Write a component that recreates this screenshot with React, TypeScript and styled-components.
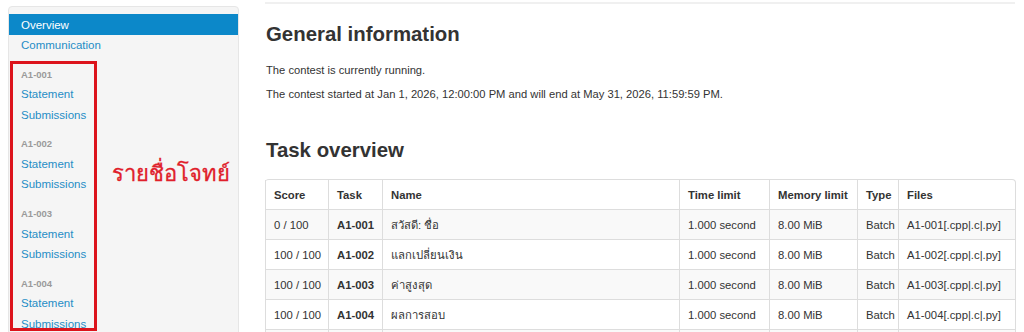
import React from "react";
import styled, { createGlobalStyle } from "styled-components";

const Global = createGlobalStyle`
  html, body { margin: 0; padding: 0; background: #fff; }
  body { font-family: "Liberation Sans", Arial, sans-serif; color: #333; overflow: hidden; }
`;

const Page = styled.div`
  display: flex;
  align-items: flex-start;
  width: 1024px;
  height: 332px;
  overflow: hidden;
`;

const SideWrap = styled.div`
  position: relative;
  margin: 6px 0 0 8px;
  width: 231px;
`;

const Well = styled.nav`
  background: #f5f5f5;
  border: 1px solid #e6e6e6;
  border-radius: 4px;
  padding: 7px 0 20px;
  height: 340px;
  box-sizing: border-box;
`;

const NavList = styled.ul`
  list-style: none;
  margin: 0;
  padding: 0;
`;

const NavItem = styled.li<{ $active?: boolean }>`
  height: 20.3px;
  display: flex;
  align-items: center;
  padding-left: 12px;
  font-size: 11.5px;
  color: ${(p) => (p.$active ? "#fff" : "#1f8dc6")};
  background: ${(p) => (p.$active ? "#0c88c9" : "transparent")};
  ${(p) => (p.$active ? "height: 21px;" : "")}
`;

const NavHeader = styled.li`
  height: 20px;
  margin-top: 9px;
  display: flex;
  align-items: center;
  padding-left: 12px;
  font-size: 9.5px;
  font-weight: bold;
  color: #9a9a9a;
`;

const RedBox = styled.div`
  position: absolute;
  left: 2px;
  top: 55px;
  width: 81px;
  height: 264px;
  border: 3px solid #dc141c;
`;

const Annotation = styled.div`
  position: absolute;
  left: 104px;
  top: 150px;
  font-size: 22px;
  color: #e0202a;
  font-family: "Liberation Sans", "Noto Sans", sans-serif;
  white-space: nowrap;
  -webkit-text-stroke: 0.3px #e0202a;
`;

const Main = styled.main`
  margin-left: 26px;
  width: 750px;
`;

const TopRule = styled.div`
  height: 2px;
  margin-top: 2px;
  background: #f0f0f0;
`;

const H2 = styled.h2<{ $top: number }>`
  margin: ${(p) => p.$top}px 0 0 1px;
  font-size: 20.4px;
  font-weight: bold;
  line-height: 24px;
  color: #333;
`;

const P = styled.p<{ $top: number }>`
  margin: ${(p) => p.$top}px 0 0 1px;
  font-size: 11.2px;
  line-height: 14px;
  color: #333;
`;

const Table = styled.table`
  margin-top: 17px;
  width: 750px;
  table-layout: fixed;
  border-collapse: separate;
  border-spacing: 0;
  border: 1px solid #ddd;
  border-left: 0;
  border-radius: 4px;
  font-size: 11.3px;
`;

const Th = styled.th`
  text-align: left;
  font-weight: bold;
  padding: 0 8px;
  height: 29px;
  border-left: 1px solid #ddd;
  color: #333;
`;

const Tr = styled.tr<{ $striped?: boolean }>`
  background: ${(p) => (p.$striped ? "#f9f9f9" : "#fff")};
`;

const Td = styled.td<{ $bold?: boolean }>`
  padding: 0 8px;
  height: 29px;
  border-left: 1px solid #ddd;
  border-top: 1px solid #ddd;
  font-weight: ${(p) => (p.$bold ? "bold" : "normal")};
  color: #333;
  white-space: nowrap;
  overflow: hidden;
`;

const widths = [63, 54, 297, 90, 88, 41, 117];

const rows = [
  { score: "0 / 100", task: "A1-001", name: "สวัสดี: ชื่อ" },
  { score: "100 / 100", task: "A1-002", name: "แลกเปลี่ยนเงิน" },
  { score: "100 / 100", task: "A1-003", name: "ค่าสูงสุด" },
  { score: "100 / 100", task: "A1-004", name: "ผลการสอบ" },
];

const groups = ["A1-001", "A1-002", "A1-003", "A1-004"];

export default function App() {
  return (
    <>
      <Global />
      <Page>
        <SideWrap>
          <Well>
            <NavList>
              <NavItem $active>Overview</NavItem>
              <NavItem>Communication</NavItem>
              {groups.map((g) => (
                <React.Fragment key={g}>
                  <NavHeader>{g}</NavHeader>
                  <NavItem>Statement</NavItem>
                  <NavItem>Submissions</NavItem>
                </React.Fragment>
              ))}
            </NavList>
          </Well>
          <RedBox />
          <Annotation>รายชื่อโจทย์</Annotation>
        </SideWrap>
        <Main>
          <TopRule />
          <H2 $top={18}>General information</H2>
          <P $top={17}>The contest is currently running.</P>
          <P $top={10}>The contest started at Jan 1, 2026, 12:00:00 PM and will end at May 31, 2026, 11:59:59 PM.</P>
          <H2 $top={37}>Task overview</H2>
          <Table>
            <colgroup>
              {widths.map((w, i) => (
                <col key={i} style={{ width: w }} />
              ))}
            </colgroup>
            <thead>
              <tr>
                <Th>Score</Th>
                <Th>Task</Th>
                <Th>Name</Th>
                <Th>Time limit</Th>
                <Th>Memory limit</Th>
                <Th>Type</Th>
                <Th>Files</Th>
              </tr>
            </thead>
            <tbody>
              {rows.map((r, i) => (
                <Tr key={r.task} $striped={i % 2 === 0}>
                  <Td>{r.score}</Td>
                  <Td $bold>{r.task}</Td>
                  <Td>{r.name}</Td>
                  <Td>1.000 second</Td>
                  <Td>8.00 MiB</Td>
                  <Td>Batch</Td>
                  <Td>{r.task}[.cpp|.c|.py]</Td>
                </Tr>
              ))}
              <Tr $striped>
                <Td>&nbsp;</Td>
                <Td>&nbsp;</Td>
                <Td>&nbsp;</Td>
                <Td>&nbsp;</Td>
                <Td>&nbsp;</Td>
                <Td>&nbsp;</Td>
                <Td>&nbsp;</Td>
              </Tr>
            </tbody>
          </Table>
        </Main>
      </Page>
    </>
  );
}
